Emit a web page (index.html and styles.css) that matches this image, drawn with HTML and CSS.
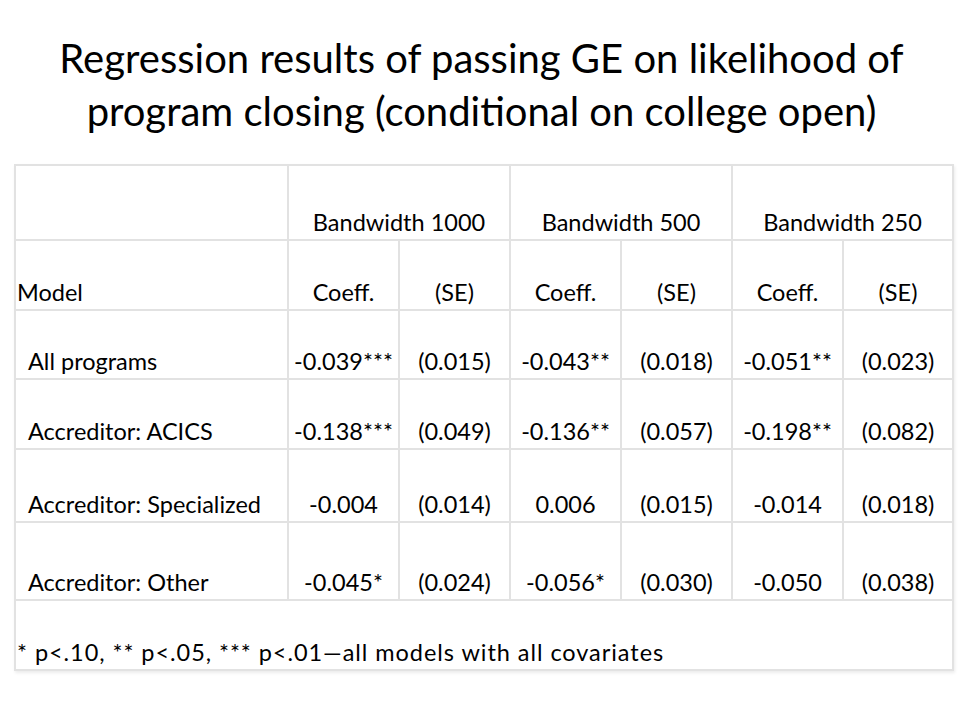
FILE: index.html
```html
<!DOCTYPE html>
<html lang="en">
<head>
<meta charset="utf-8">
<title>Regression results</title>
<link rel="stylesheet" href="styles.css">
</head>
<body>
<div class="slide">
  <h1 class="title">Regression results of passing GE on likelihood of<br>program closing (conditional on college open)</h1>
  <table class="results">
    <colgroup>
      <col class="c-label">
      <col class="c-num"><col class="c-num">
      <col class="c-num"><col class="c-num">
      <col class="c-num"><col class="c-num-last">
    </colgroup>
    <tr class="r-band">
      <td></td>
      <td colspan="2" class="ctr">Bandwidth 1000</td>
      <td colspan="2" class="ctr">Bandwidth 500</td>
      <td colspan="2" class="ctr">Bandwidth 250</td>
    </tr>
    <tr class="r-head">
      <td class="lbl">Model</td>
      <td class="ctr">Coeff.</td><td class="ctr">(SE)</td>
      <td class="ctr">Coeff.</td><td class="ctr">(SE)</td>
      <td class="ctr">Coeff.</td><td class="ctr">(SE)</td>
    </tr>
    <tr class="r-all">
      <td class="lbl ind">All programs</td>
      <td class="ctr">-0.039***</td><td class="ctr">(0.015)</td>
      <td class="ctr">-0.043**</td><td class="ctr">(0.018)</td>
      <td class="ctr">-0.051**</td><td class="ctr">(0.023)</td>
    </tr>
    <tr class="r-acics">
      <td class="lbl ind">Accreditor: ACICS</td>
      <td class="ctr">-0.138***</td><td class="ctr">(0.049)</td>
      <td class="ctr">-0.136**</td><td class="ctr">(0.057)</td>
      <td class="ctr">-0.198**</td><td class="ctr">(0.082)</td>
    </tr>
    <tr class="r-spec">
      <td class="lbl ind">Accreditor: Specialized</td>
      <td class="ctr">-0.004</td><td class="ctr">(0.014)</td>
      <td class="ctr">0.006</td><td class="ctr">(0.015)</td>
      <td class="ctr">-0.014</td><td class="ctr">(0.018)</td>
    </tr>
    <tr class="r-other">
      <td class="lbl ind">Accreditor: Other</td>
      <td class="ctr">-0.045*</td><td class="ctr">(0.024)</td>
      <td class="ctr">-0.056*</td><td class="ctr">(0.030)</td>
      <td class="ctr">-0.050</td><td class="ctr">(0.038)</td>
    </tr>
    <tr class="r-note">
      <td colspan="7" class="lbl note">* p&lt;.10, ** p&lt;.05, *** p&lt;.01—all models with all covariates</td>
    </tr>
  </table>
</div>
</body>
</html>
```
FILE: styles.css
```css
html, body {
  margin: 0;
  padding: 0;
  background: #ffffff;
}

.slide {
  width: 963px;
  height: 715px;
  padding-top: 32px;
  box-sizing: border-box;
  font-family: Lato, "Open Sans", "Liberation Sans", sans-serif;
  color: #000000;
}

.title {
  margin: 0;
  font-weight: 400;
  font-size: 40px;
  line-height: 53px;
  text-align: center;
}

.results {
  margin: 26px 0 0 14px;
  border-collapse: collapse;
  table-layout: fixed;
  width: 938px;
  font-size: 23.5px;
  line-height: 28px;
  box-shadow: 1px 2px 3px rgba(0, 0, 0, 0.08);
}

.c-label { width: 273px; }
.c-num { width: 111px; }
.c-num-last { width: 110px; }

.results td {
  border: 2px solid #e2e2e2;
  vertical-align: bottom;
  padding: 0 0 3px 0;
  white-space: nowrap;
}

.ctr { text-align: center; }
.lbl { text-align: left; }
.results td.lbl { padding-left: 1px; }
.results td.ind { padding-left: 12px; }
.note { letter-spacing: 0.95px; }

.r-band { height: 75px; }
.r-head { height: 70px; }
.r-all { height: 69px; }
.r-acics { height: 70px; }
.r-spec { height: 73px; }
.r-other { height: 78px; }
.r-note { height: 70px; }
```
